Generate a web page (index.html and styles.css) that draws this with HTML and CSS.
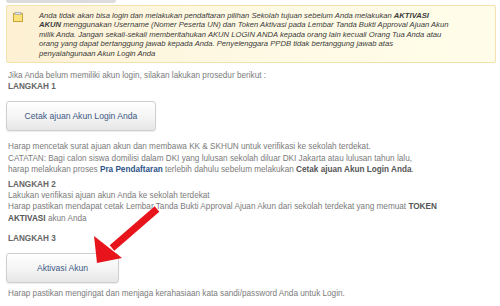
FILE: index.html
```html
<!DOCTYPE html>
<html>
<head>
<meta charset="utf-8">
<link rel="stylesheet" href="styles.css">
</head>
<body>
<div class="page">
  <div class="topbar"></div>
  <div class="notice">
    <svg class="note-icon" width="11" height="10" viewBox="0 0 11 10">
      <rect x="0.5" y="1.5" width="9" height="8" fill="#fbe27a" stroke="#c9a43a" stroke-width="1"/>
      <rect x="2" y="0.5" width="6" height="2" fill="#e6e6e6" stroke="#a9a9a9" stroke-width="0.8"/>
    </svg>
    <p class="notice-text">Anda tidak akan bisa login dan melakukan pendaftaran pilihan Sekolah tujuan sebelum Anda melakukan <b>AKTIVASI</b><br><b>AKUN</b> menggunakan Username (Nomer Peserta UN) dan Token Aktivasi pada Lembar Tanda Bukti Approval Ajuan Akun<br>milik Anda. Jangan sekali-sekali memberitahukan AKUN LOGIN ANDA kepada orang lain kecuali Orang Tua Anda atau<br>orang yang dapat bertanggung jawab kepada Anda. Penyelenggara PPDB tidak bertanggung jawab atas<br>penyalahgunaan Akun Login Anda</p>
  </div>

  <div class="content">
    <p class="intro">Jika Anda belum memiliki akun login, silakan lakukan prosedur berikut :</p>
    <h4 class="step step1">LANGKAH 1</h4>
    <button class="btn btn-cetak">Cetak ajuan Akun Login Anda</button>
    <p class="para p1">Harap mencetak surat ajuan akun dan membawa KK &amp; SKHUN untuk verifikasi ke sekolah terdekat.<br>CATATAN: Bagi calon siswa domilisi dalam DKI yang lulusan sekolah diluar DKI Jakarta atau lulusan tahun lalu,<br>harap melakukan proses <b class="link">Pra Pendaftaran</b> terlebih dahulu sebelum melakukan <b>Cetak ajuan Akun Login Anda</b>.</p>
    <h4 class="step step2">LANGKAH 2</h4>
    <p class="para p2">Lakukan verifikasi ajuan akun Anda ke sekolah terdekat<br>Harap pastikan mendapat cetak Lembar Tanda Bukti Approval Ajuan Akun dari sekolah terdekat yang memuat <b>TOKEN</b><br><b>AKTIVASI</b> akun Anda</p>
    <h4 class="step step3">LANGKAH 3</h4>
    <button class="btn btn-aktivasi">Aktivasi Akun</button>
    <p class="para p3">Harap pastikan mengingat dan menjaga kerahasiaan kata sandi/password Anda untuk Login.</p>
  </div>

  <svg class="arrow" width="72" height="70" viewBox="0 0 72 70">
    <line x1="67" y1="9" x2="22" y2="48" stroke="#e8141b" stroke-width="7" stroke-linecap="butt"/>
    <polygon points="7,63 4,36 32,58" fill="#e8141b"/>
  </svg>
</div>
</body>
</html>
```

FILE: styles.css
```css
html, body {
  margin: 0;
  padding: 0;
  background: #ffffff;
}
.page {
  position: relative;
  width: 500px;
  height: 306px;
  overflow: hidden;
  font-family: "Liberation Sans", Arial, sans-serif;
}
.topbar {
  margin-left: 6px;
  width: 110px;
  height: 3px;
  background: #dcdcdc;
  border-radius: 0 0 3px 3px;
}
.notice {
  margin: 2px 4px 0 6px;
  height: 58px;
  box-sizing: border-box;
  border: 1px solid #f2e2ae;
  border-radius: 2px;
  background: linear-gradient(90deg, #fdf0d3 0%, #fef8e2 40%, #fffde9 100%);
  display: flex;
  align-items: flex-start;
  padding: 5px 0 0 6px;
}
.note-icon {
  flex: none;
  margin-top: 1px;
}
.notice-text {
  margin: 0 0 0 15px;
  font-style: italic;
  font-size: 7.65px;
  line-height: 9.4px;
  color: #3a3a3a;
  white-space: nowrap;
}
.notice-text b {
  font-weight: bold;
}
.content {
  padding-left: 8px;
  color: #7b7b7b;
  font-size: 8.2px;
  line-height: 11.2px;
}
.content p {
  margin: 0;
}
.intro {
  padding-top: 7px;
}
.step {
  margin: 0;
  font-size: 8.2px;
  line-height: 11.2px;
  font-weight: bold;
  color: #666;
}
.step2 {
  margin-top: 4px;
}
.step3 {
  margin-top: 9px;
}
.para b {
  color: #555;
}
.para b.link {
  color: #2c5286;
}
.btn {
  display: block;
  box-sizing: border-box;
  height: 30px;
  margin-left: -2px;
  border: 1px solid #cfcfcf;
  border-radius: 3px;
  background: linear-gradient(180deg, #ffffff 0%, #f4f4f4 55%, #e6e6e6 100%);
  box-shadow: 0 1px 1px rgba(0,0,0,0.08);
  font-family: "Liberation Sans", Arial, sans-serif;
  font-size: 8.6px;
  color: #3e5a85;
  padding: 0;
}
.btn-cetak {
  width: 150px;
  margin-top: 9px;
  margin-bottom: 10px;
}
.btn-aktivasi {
  width: 113px;
  margin-top: 9px;
  margin-bottom: 5px;
}
.arrow {
  position: absolute;
  left: 90px;
  top: 200px;
}
```
